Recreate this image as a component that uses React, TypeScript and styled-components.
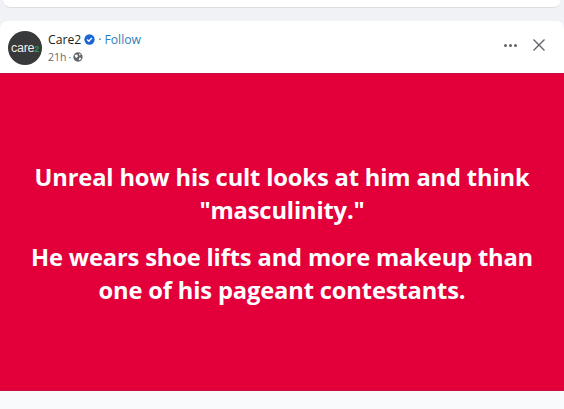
import React from "react";
import styled, { createGlobalStyle } from "styled-components";

const GlobalStyle = createGlobalStyle`
  html, body {
    margin: 0;
    padding: 0;
    background: #f0f2f5;
  }
`;

export default function App() {
  return (
    <>
      <GlobalStyle />
      <Feed>
        <PrevCard />
        <PostCard>
          <PostHeader>
            <Avatar>
              <AvatarText>
                care<AvatarTwo>2</AvatarTwo>
              </AvatarText>
            </Avatar>
            <Meta>
              <NameRow>
                <Name>Care2</Name>
                <svg width="11" height="11" viewBox="0 0 12 12">
                  <circle cx="6" cy="6" r="5.6" fill="#1b65d4" />
                  <path d="M3.4 6.1 5.2 7.9 8.6 4.4" stroke="#fff" strokeWidth="1.5" fill="none" />
                </svg>
                <Dot>·</Dot>
                <Follow>Follow</Follow>
              </NameRow>
              <TimeRow>
                <span>21h</span>
                <span>·</span>
                <svg width="10" height="10" viewBox="0 0 12 12">
                  <circle cx="6" cy="6" r="5.6" fill="#65676b" />
                  <path d="M2 3.5 5 3 6 5 4.5 7 3 6.5ZM7 1.5 9.5 3 8 4.5ZM7.5 7 10 6.8 8.5 10 7 9.5Z" fill="#fff" />
                </svg>
              </TimeRow>
            </Meta>
            <Actions>
              <MoreDots>
                <i />
                <i />
                <i />
              </MoreDots>
              <svg width="14" height="14" viewBox="0 0 14 14">
                <path d="M1.5 1.5 12.5 12.5M12.5 1.5 1.5 12.5" stroke="#606368" strokeWidth="1.4" fill="none" />
              </svg>
            </Actions>
          </PostHeader>
          <RedPanel>
            <Para>
              Unreal how his cult looks at him and think
              <br />
              "masculinity."
            </Para>
            <Para>
              He wears shoe lifts and more makeup than
              <br />
              one of his pageant contestants.
            </Para>
          </RedPanel>
        </PostCard>
        <NextCard />
      </Feed>
    </>
  );
}

const Feed = styled.div`
  width: 564px;
  height: 409px;
  overflow: hidden;
  background: #f0f2f5;
  font-family: "Open Sans", "Liberation Sans", sans-serif;
`;

const PrevCard = styled.div`
  height: 7px;
  margin: 0 3px 13px;
  background: #fff;
  border-bottom: 1px solid #dcdee2;
  border-radius: 0 0 8px 8px;
`;

const PostCard = styled.div`
  background: #fff;
  border-radius: 8px 8px 0 0;
`;

const PostHeader = styled.div`
  height: 52px;
  box-sizing: border-box;
  display: flex;
  align-items: center;
  padding: 0 18px 0 8px;
`;

const Avatar = styled.div`
  width: 34px;
  height: 34px;
  border-radius: 50%;
  background: #37393a;
  display: flex;
  align-items: center;
  justify-content: center;
  margin: 2px 6px 0 0;
  flex: none;
`;

const AvatarText = styled.span`
  color: #eeeeee;
  font-family: "Liberation Sans", sans-serif;
  font-size: 12.5px;
  letter-spacing: -0.3px;
`;

const AvatarTwo = styled.span`
  color: #2f9a58;
  font-size: 9px;
  font-weight: 700;
`;

const Meta = styled.div`
  display: flex;
  flex-direction: column;
  gap: 4px;
`;

const NameRow = styled.div`
  display: flex;
  align-items: center;
  gap: 3px;
  font-size: 12.2px;
  font-weight: 500;
  line-height: 15px;
  color: #1c1e21;
`;

const Name = styled.span``;

const Dot = styled.span`
  color: #65676b;
  font-weight: 400;
`;

const Follow = styled.span`
  color: #2d7fb8;
`;

const TimeRow = styled.div`
  display: flex;
  align-items: center;
  gap: 2px;
  font-size: 10.5px;
  line-height: 12px;
  color: #65676b;
`;

const Actions = styled.div`
  margin: 0 0 4px auto;
  display: flex;
  align-items: center;
  gap: 15px;
`;

const MoreDots = styled.div`
  display: flex;
  gap: 2px;

  i {
    display: block;
    width: 3px;
    height: 3px;
    border-radius: 50%;
    background: #606368;
  }
`;

const RedPanel = styled.div`
  height: 318px;
  background: #e3003a;
  border-top: 1px solid #c4103c;
  border-bottom: 1px solid #c4103c;
  box-sizing: border-box;
  display: flex;
  flex-direction: column;
  align-items: center;
  justify-content: center;
  gap: 14px;
  padding-top: 3px;
`;

const Para = styled.p`
  margin: 0;
  color: #fff;
  font-size: 23.7px;
  font-weight: 700;
  line-height: 33px;
  letter-spacing: -0.15px;
  text-align: center;
  white-space: nowrap;
`;

const NextCard = styled.div`
  height: 18px;
  background: #f9fafb;
`;
